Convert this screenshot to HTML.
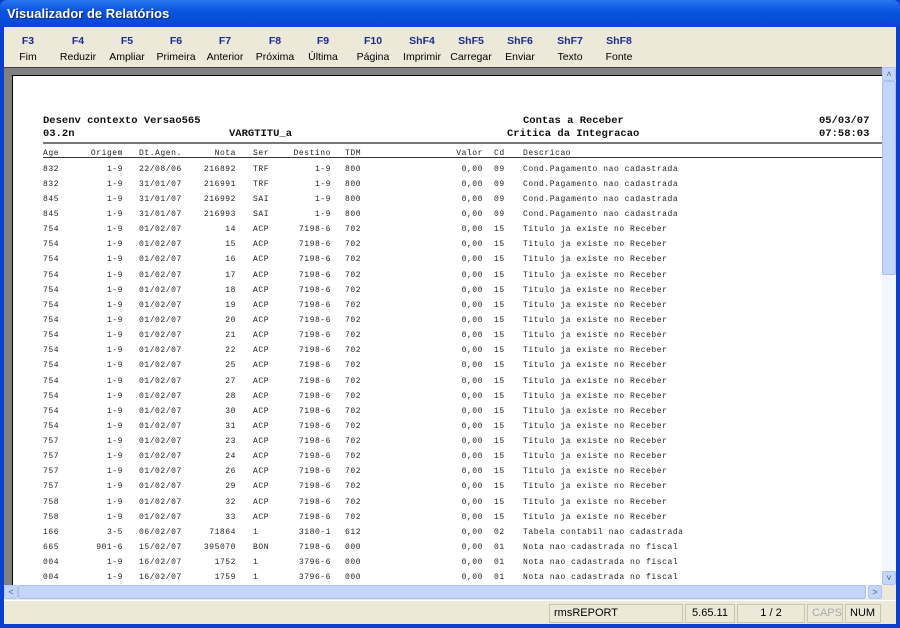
<!DOCTYPE html>
<html><head><meta charset="utf-8"><style>
*{margin:0;padding:0;box-sizing:border-box}
body{width:900px;height:628px;overflow:hidden;background:#0a3fd0;font-family:"Liberation Sans",sans-serif;position:relative}
.title{position:absolute;left:0;top:0;width:900px;height:27px;background:linear-gradient(#2a75f0,#0a55e0 40%,#0646d2);border-radius:7px 7px 0 0}
.title span{position:absolute;left:7px;top:6px;color:#fff;font-weight:bold;font-size:13px;text-shadow:1px 1px #0a2a80}
.frame{position:absolute;left:4px;top:27px;width:892px;height:597px;background:#ece9d8}
.tb{position:absolute;top:0;width:50px;margin-left:-25px;text-align:center}
.tb b{display:block;color:#1c2a8c;font-size:10.5px;margin-top:8px}
.tb i{display:block;font-style:normal;color:#000;font-size:10.5px;margin-top:4px}
.gray{position:absolute;left:0;top:40px;width:878px;height:518px;background:#808080;border-top:1px solid #404040}
.page{position:absolute;left:8px;top:7px;width:870px;height:520px;background:#fff;border-left:1px solid #000;border-top:1px solid #000;overflow:hidden}
.vs{position:absolute;left:878px;top:40px;width:14px;height:518px;background:#f3f6fd}
.hs{position:absolute;left:0;top:558px;width:878px;height:14px;background:#f3f6fd}
.sbtn{position:absolute;width:14px;height:14px;background:#c4d5fb;border:1px solid #b0c4f0;border-radius:2px;color:#4d6185;font-size:9px;text-align:center;line-height:12px}
.status{position:absolute;left:0;top:573px;width:892px;height:24px;border-top:1px solid #fff}
.p{position:absolute;top:3px;height:19px;border:1px solid #c8c4b0;font-size:11px;line-height:17px;padding-left:4px}
.h{position:absolute;font-family:"Liberation Mono",monospace;font-weight:bold;font-size:10.5px;color:#111}
.r{position:absolute;left:0;width:870px;height:12px;font-family:"Liberation Mono",monospace;font-size:8px;letter-spacing:.55px;color:#222}
.r span{position:absolute;top:0;white-space:pre}
.a{left:30px}.b{right:760px}.c{left:126px}.d{right:647px}.e{left:240px}.f{right:552px}.g{left:332px}.hh{right:400px}.i{left:481px}.j{left:510px}
</style></head><body>
<div class="title"><span>Visualizador de Relatórios</span></div>
<div class="frame">
<div class="tb" style="left:24px"><b>F3</b><i>Fim</i></div>
<div class="tb" style="left:74px"><b>F4</b><i>Reduzir</i></div>
<div class="tb" style="left:123px"><b>F5</b><i>Ampliar</i></div>
<div class="tb" style="left:172px"><b>F6</b><i>Primeira</i></div>
<div class="tb" style="left:221px"><b>F7</b><i>Anterior</i></div>
<div class="tb" style="left:271px"><b>F8</b><i>Próxima</i></div>
<div class="tb" style="left:319px"><b>F9</b><i>Última</i></div>
<div class="tb" style="left:369px"><b>F10</b><i>Página</i></div>
<div class="tb" style="left:418px"><b>ShF4</b><i>Imprimir</i></div>
<div class="tb" style="left:467px"><b>ShF5</b><i>Carregar</i></div>
<div class="tb" style="left:516px"><b>ShF6</b><i>Enviar</i></div>
<div class="tb" style="left:566px"><b>ShF7</b><i>Texto</i></div>
<div class="tb" style="left:615px"><b>ShF8</b><i>Fonte</i></div>
<div class="gray"><div class="page">
<div class="h" style="left:30px;top:39px">Desenv contexto Versao565</div>
<div class="h" style="left:30px;top:52px">03.2n</div>
<div class="h" style="left:216px;top:52px">VARGTITU_a</div>
<div class="h" style="left:510px;top:39px">Contas a Receber</div>
<div class="h" style="left:494px;top:52px">Critica da Integracao</div>
<div class="h" style="left:806px;top:39px">05/03/07</div>
<div class="h" style="left:806px;top:52px">07:58:03</div>
<div style="position:absolute;left:30px;top:66px;width:840px;height:2px;background:#777"></div>
<div class="r" style="top:73px"><span class="a">Age</span><span class="b">Origem</span><span class="c">Dt.Agen.</span><span class="d">Nota</span><span class="e">Ser</span><span class="f">Destino</span><span class="g">TDM</span><span class="hh">Valor</span><span class="i">Cd</span><span class="j">Descricao</span></div>
<div style="position:absolute;left:30px;top:81px;width:840px;height:1px;background:#333"></div>
<div class="r" style="top:89px"><span class="a">832</span><span class="b">1-9</span><span class="c">22/08/06</span><span class="d">216892</span><span class="e">TRF</span><span class="f">1-9</span><span class="g">800</span><span class="hh">0,00</span><span class="i">09</span><span class="j">Cond.Pagamento nao cadastrada</span></div>
<div class="r" style="top:104px"><span class="a">832</span><span class="b">1-9</span><span class="c">31/01/07</span><span class="d">216991</span><span class="e">TRF</span><span class="f">1-9</span><span class="g">800</span><span class="hh">0,00</span><span class="i">09</span><span class="j">Cond.Pagamento nao cadastrada</span></div>
<div class="r" style="top:119px"><span class="a">845</span><span class="b">1-9</span><span class="c">31/01/07</span><span class="d">216992</span><span class="e">SAI</span><span class="f">1-9</span><span class="g">800</span><span class="hh">0,00</span><span class="i">09</span><span class="j">Cond.Pagamento nao cadastrada</span></div>
<div class="r" style="top:134px"><span class="a">845</span><span class="b">1-9</span><span class="c">31/01/07</span><span class="d">216993</span><span class="e">SAI</span><span class="f">1-9</span><span class="g">800</span><span class="hh">0,00</span><span class="i">09</span><span class="j">Cond.Pagamento nao cadastrada</span></div>
<div class="r" style="top:149px"><span class="a">754</span><span class="b">1-9</span><span class="c">01/02/07</span><span class="d">14</span><span class="e">ACP</span><span class="f">7198-6</span><span class="g">702</span><span class="hh">0,00</span><span class="i">15</span><span class="j">Titulo ja existe no Receber</span></div>
<div class="r" style="top:164px"><span class="a">754</span><span class="b">1-9</span><span class="c">01/02/07</span><span class="d">15</span><span class="e">ACP</span><span class="f">7198-6</span><span class="g">702</span><span class="hh">0,00</span><span class="i">15</span><span class="j">Titulo ja existe no Receber</span></div>
<div class="r" style="top:179px"><span class="a">754</span><span class="b">1-9</span><span class="c">01/02/07</span><span class="d">16</span><span class="e">ACP</span><span class="f">7198-6</span><span class="g">702</span><span class="hh">0,00</span><span class="i">15</span><span class="j">Titulo ja existe no Receber</span></div>
<div class="r" style="top:195px"><span class="a">754</span><span class="b">1-9</span><span class="c">01/02/07</span><span class="d">17</span><span class="e">ACP</span><span class="f">7198-6</span><span class="g">702</span><span class="hh">0,00</span><span class="i">15</span><span class="j">Titulo ja existe no Receber</span></div>
<div class="r" style="top:210px"><span class="a">754</span><span class="b">1-9</span><span class="c">01/02/07</span><span class="d">18</span><span class="e">ACP</span><span class="f">7198-6</span><span class="g">702</span><span class="hh">0,00</span><span class="i">15</span><span class="j">Titulo ja existe no Receber</span></div>
<div class="r" style="top:225px"><span class="a">754</span><span class="b">1-9</span><span class="c">01/02/07</span><span class="d">19</span><span class="e">ACP</span><span class="f">7198-6</span><span class="g">702</span><span class="hh">0,00</span><span class="i">15</span><span class="j">Titulo ja existe no Receber</span></div>
<div class="r" style="top:240px"><span class="a">754</span><span class="b">1-9</span><span class="c">01/02/07</span><span class="d">20</span><span class="e">ACP</span><span class="f">7198-6</span><span class="g">702</span><span class="hh">0,00</span><span class="i">15</span><span class="j">Titulo ja existe no Receber</span></div>
<div class="r" style="top:255px"><span class="a">754</span><span class="b">1-9</span><span class="c">01/02/07</span><span class="d">21</span><span class="e">ACP</span><span class="f">7198-6</span><span class="g">702</span><span class="hh">0,00</span><span class="i">15</span><span class="j">Titulo ja existe no Receber</span></div>
<div class="r" style="top:270px"><span class="a">754</span><span class="b">1-9</span><span class="c">01/02/07</span><span class="d">22</span><span class="e">ACP</span><span class="f">7198-6</span><span class="g">702</span><span class="hh">0,00</span><span class="i">15</span><span class="j">Titulo ja existe no Receber</span></div>
<div class="r" style="top:285px"><span class="a">754</span><span class="b">1-9</span><span class="c">01/02/07</span><span class="d">25</span><span class="e">ACP</span><span class="f">7198-6</span><span class="g">702</span><span class="hh">0,00</span><span class="i">15</span><span class="j">Titulo ja existe no Receber</span></div>
<div class="r" style="top:301px"><span class="a">754</span><span class="b">1-9</span><span class="c">01/02/07</span><span class="d">27</span><span class="e">ACP</span><span class="f">7198-6</span><span class="g">702</span><span class="hh">0,00</span><span class="i">15</span><span class="j">Titulo ja existe no Receber</span></div>
<div class="r" style="top:316px"><span class="a">754</span><span class="b">1-9</span><span class="c">01/02/07</span><span class="d">28</span><span class="e">ACP</span><span class="f">7198-6</span><span class="g">702</span><span class="hh">0,00</span><span class="i">15</span><span class="j">Titulo ja existe no Receber</span></div>
<div class="r" style="top:331px"><span class="a">754</span><span class="b">1-9</span><span class="c">01/02/07</span><span class="d">30</span><span class="e">ACP</span><span class="f">7198-6</span><span class="g">702</span><span class="hh">0,00</span><span class="i">15</span><span class="j">Titulo ja existe no Receber</span></div>
<div class="r" style="top:346px"><span class="a">754</span><span class="b">1-9</span><span class="c">01/02/07</span><span class="d">31</span><span class="e">ACP</span><span class="f">7198-6</span><span class="g">702</span><span class="hh">0,00</span><span class="i">15</span><span class="j">Titulo ja existe no Receber</span></div>
<div class="r" style="top:361px"><span class="a">757</span><span class="b">1-9</span><span class="c">01/02/07</span><span class="d">23</span><span class="e">ACP</span><span class="f">7198-6</span><span class="g">702</span><span class="hh">0,00</span><span class="i">15</span><span class="j">Titulo ja existe no Receber</span></div>
<div class="r" style="top:376px"><span class="a">757</span><span class="b">1-9</span><span class="c">01/02/07</span><span class="d">24</span><span class="e">ACP</span><span class="f">7198-6</span><span class="g">702</span><span class="hh">0,00</span><span class="i">15</span><span class="j">Titulo ja existe no Receber</span></div>
<div class="r" style="top:391px"><span class="a">757</span><span class="b">1-9</span><span class="c">01/02/07</span><span class="d">26</span><span class="e">ACP</span><span class="f">7198-6</span><span class="g">702</span><span class="hh">0,00</span><span class="i">15</span><span class="j">Titulo ja existe no Receber</span></div>
<div class="r" style="top:406px"><span class="a">757</span><span class="b">1-9</span><span class="c">01/02/07</span><span class="d">29</span><span class="e">ACP</span><span class="f">7198-6</span><span class="g">702</span><span class="hh">0,00</span><span class="i">15</span><span class="j">Titulo ja existe no Receber</span></div>
<div class="r" style="top:422px"><span class="a">758</span><span class="b">1-9</span><span class="c">01/02/07</span><span class="d">32</span><span class="e">ACP</span><span class="f">7198-6</span><span class="g">702</span><span class="hh">0,00</span><span class="i">15</span><span class="j">Titulo ja existe no Receber</span></div>
<div class="r" style="top:437px"><span class="a">758</span><span class="b">1-9</span><span class="c">01/02/07</span><span class="d">33</span><span class="e">ACP</span><span class="f">7198-6</span><span class="g">702</span><span class="hh">0,00</span><span class="i">15</span><span class="j">Titulo ja existe no Receber</span></div>
<div class="r" style="top:452px"><span class="a">166</span><span class="b">3-5</span><span class="c">06/02/07</span><span class="d">71864</span><span class="e">1</span><span class="f">3180-1</span><span class="g">612</span><span class="hh">0,00</span><span class="i">02</span><span class="j">Tabela contabil nao cadastrada</span></div>
<div class="r" style="top:467px"><span class="a">665</span><span class="b">901-6</span><span class="c">15/02/07</span><span class="d">395070</span><span class="e">BON</span><span class="f">7198-6</span><span class="g">000</span><span class="hh">0,00</span><span class="i">01</span><span class="j">Nota nao cadastrada no fiscal</span></div>
<div class="r" style="top:482px"><span class="a">004</span><span class="b">1-9</span><span class="c">16/02/07</span><span class="d">1752</span><span class="e">1</span><span class="f">3796-6</span><span class="g">000</span><span class="hh">0,00</span><span class="i">01</span><span class="j">Nota nao cadastrada no fiscal</span></div>
<div class="r" style="top:497px"><span class="a">004</span><span class="b">1-9</span><span class="c">16/02/07</span><span class="d">1759</span><span class="e">1</span><span class="f">3796-6</span><span class="g">000</span><span class="hh">0,00</span><span class="i">01</span><span class="j">Nota nao cadastrada no fiscal</span></div>
</div></div>
<div class="vs">
<div class="sbtn" style="left:0;top:0">&#708;</div>
<div style="position:absolute;left:0;top:14px;width:14px;height:194px;background:#c4d5fb;border:1px solid #a8bdf0;border-radius:2px"></div>
<div class="sbtn" style="left:0;top:504px">&#709;</div>
</div>
<div class="hs">
<div class="sbtn" style="left:0;top:0">&lt;</div>
<div style="position:absolute;left:14px;top:0;width:848px;height:14px;background:#c4d5fb;border:1px solid #a8bdf0;border-radius:2px"></div>
<div class="sbtn" style="left:864px;top:0">&gt;</div>
</div>
<div class="status">
<div class="p" style="left:545px;width:134px">rmsREPORT</div>
<div class="p" style="left:681px;width:50px;text-align:center;padding:0">5.65.11</div>
<div class="p" style="left:733px;width:68px;text-align:center;padding:0">1 / 2</div>
<div class="p" style="left:803px;width:36px;color:#a8a8a8">CAPS</div>
<div class="p" style="left:841px;width:36px">NUM</div>
</div>
</div>
</body></html>
